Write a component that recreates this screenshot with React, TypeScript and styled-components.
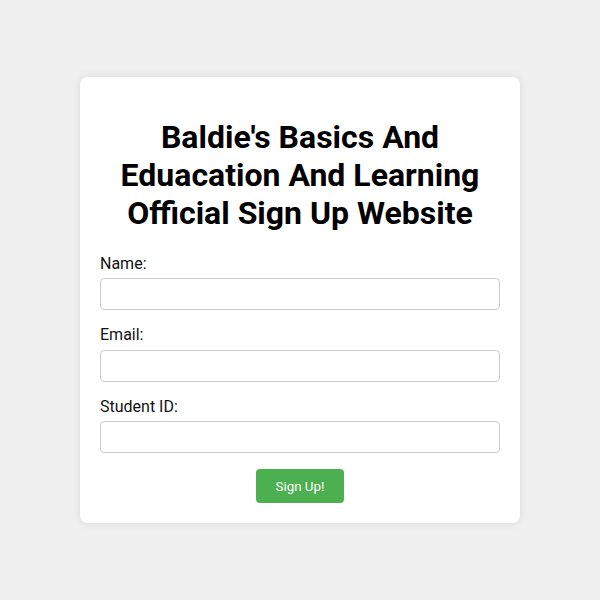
import React from "react";
import styled, { createGlobalStyle } from "styled-components";

const Global = createGlobalStyle`
  html, body { margin: 0; padding: 0; }
  body {
    background: #f0f0f0;
    font-family: Roboto, "Liberation Sans", Arial, sans-serif;
  }
`;

const Page = styled.div`
  min-height: 100vh;
  display: flex;
  align-items: center;
  justify-content: center;
`;

const Card = styled.div`
  width: 400px;
  padding: 20px;
  background: #ffffff;
  border-radius: 8px;
  box-shadow: 0 0 10px rgba(0, 0, 0, 0.1);
`;

const Title = styled.h1`
  margin: 21.44px 0;
  font-size: 32px;
  font-weight: 700;
  text-align: center;
  color: #000;
  line-height: 38px;
`;

const Form = styled.form`
  display: flex;
  flex-direction: column;
`;

const Label = styled.label`
  display: block;
  font-size: 16px;
  line-height: 19px;
  color: #111;
  margin-bottom: 5.6px;
`;

const Input = styled.input`
  box-sizing: border-box;
  width: 100%;
  height: 32px;
  padding: 6px 8px;
  margin-bottom: 15px;
  border: 1px solid #cccccc;
  border-radius: 4px;
  font-family: inherit;
  font-size: 14px;
  outline: none;
`;

const Button = styled.button`
  align-self: center;
  margin-top: 1px;
  height: 34px;
  padding: 0 20px;
  background: #4caf50;
  color: #ffffff;
  border: none;
  border-radius: 4px;
  font-family: Roboto, "Liberation Sans", Arial, sans-serif;
  font-size: 13.33px;
  cursor: pointer;
`;

export default function App() {
  return (
    <>
      <Global />
      <Page>
        <Card>
          <Title>Baldie's Basics And Eduacation And Learning Official Sign Up Website</Title>
          <Form onSubmit={(e) => e.preventDefault()}>
            <Label htmlFor="name">Name:</Label>
            <Input id="name" type="text" />
            <Label htmlFor="email">Email:</Label>
            <Input id="email" type="email" />
            <Label htmlFor="sid">Student ID:</Label>
            <Input id="sid" type="text" />
            <Button type="submit">Sign Up!</Button>
          </Form>
        </Card>
      </Page>
    </>
  );
}
